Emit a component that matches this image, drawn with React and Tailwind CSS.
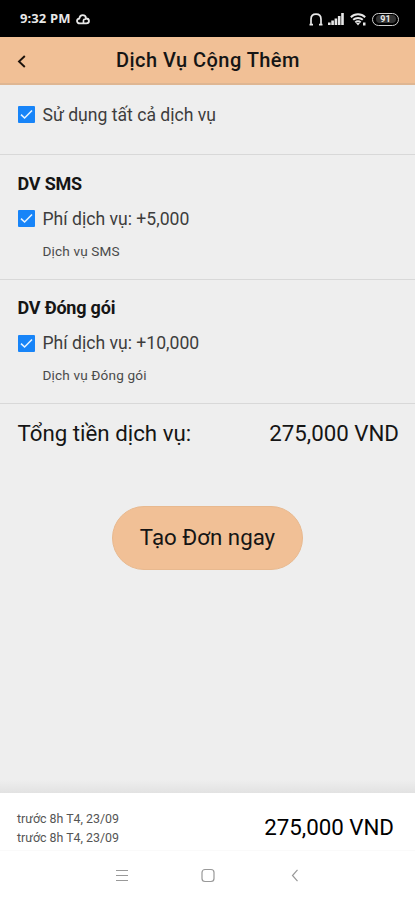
import { useState } from 'react';

const services = [
  { id: 'sms', title: 'DV SMS', fee: '+5,000', note: 'Dịch vụ SMS' },
  { id: 'pack', title: 'DV Đóng gói', fee: '+10,000', note: 'Dịch vụ Đóng gói' },
];

function StatusBar() {
  return (
    <div className="flex h-[37px] shrink-0 items-center justify-between bg-black pl-[20px] pr-[16px] pt-px text-[#e8e8e8]">
      <div className="flex items-center gap-[5px]">
        <span className="w-[51px] whitespace-nowrap font-['Open_Sans',sans-serif] text-[13px] font-bold tracking-[0.1px]">9:32 PM</span>
        <svg width="14" height="11" viewBox="0 0 15 12" fill="none" stroke="currentColor" strokeWidth="2">
          <path d="M4 10.2C2.2 10.2 1 9.2 1 7.6C1 6.2 2 5.2 3.4 5.1C3.8 2.7 5.2 1.3 7.1 1.3C9.3 1.3 10.6 2.8 10.8 4.9C12.8 4.9 14 6.1 14 7.6C14 9.2 12.8 10.2 11.1 10.2Z" />
          <path d="M8 10V7.2C8 6 9.500 5.400 10.800 5.400" strokeWidth="1.8" />
        </svg>
      </div>
      <div className="flex items-center">
        <svg className="mr-[5px]" width="14" height="13" viewBox="0 0 14 13" fill="none" stroke="currentColor">
          <path d="M2 11V6.3C2 3 4 1.2 7 1.2C10 1.2 12 3 12 6.3V11" strokeWidth="1.7" />
          <path d="M0.5 11.6H4M13.5 11.6H10" strokeWidth="1.8" />
        </svg>
        <svg className="mr-[6px]" width="16" height="12" viewBox="0 0 16 12" fill="currentColor">
          <path d="M0 9.5h2.6V12H0zM3.3 7.5h2.6V12H3.3zM6.6 5.4h2.6V12H6.6zM9.9 3h2.6v9H9.9zM13.2 0h2.6v12h-2.6z" />
        </svg>
        <svg className="mr-[5px]" width="17" height="13" viewBox="0 0 17 13" fill="none" stroke="currentColor" strokeWidth="1.9">
          <path d="M0.8 4.2C4.8 0.3 11.2 0.3 15.2 4.2" />
          <path d="M3.2 6.8C5.8 4.3 10.2 4.3 12.8 6.8" />
          <path d="M5.3 9.3C6.8 7.8 9.2 7.8 10.7 9.3" />
          <path d="M6 10L8 12.4L10 10ZM13 9.5h2.5v3H13z" fill="currentColor" stroke="none" />
        </svg>
        <div className="flex h-[13px] w-[27px] items-center justify-center rounded-full border-[1.5px] border-[#cfcfcf]">
          <span className="flex h-[8px] w-[20px] items-center justify-center rounded-sm bg-[#333] font-[Roboto,sans-serif] text-[9px] font-bold leading-none">91</span>
        </div>
      </div>
    </div>
  );
}

function Checkbox({ checked, onChange, label }) {
  return (
    <label className="flex h-[22px] items-center">
      <input type="checkbox" className="sr-only" checked={checked} onChange={onChange} />
      <span className="mr-[8px] flex size-[17px] shrink-0 items-center justify-center rounded-[1px] bg-[#1784f8]">
        {checked && (
          <svg width="13" height="11" viewBox="0 0 13 11" fill="none" stroke="#e6f3ff" strokeWidth="1.6">
            <path d="M1 5.6L4.6 9L12 1.5" />
          </svg>
        )}
      </span>
      <span className="whitespace-nowrap text-[17.6px] leading-[22px] text-[#3d3d3d]">{label}</span>
    </label>
  );
}

export default function App() {
  const [selected, setSelected] = useState(['sms', 'pack']);
  const allSelected = selected.length === services.length;

  const toggleAll = () => {
    setSelected(allSelected ? [] : services.map((s) => s.id));
  };

  const toggle = (id) => {
    setSelected(selected.includes(id) ? selected.filter((s) => s !== id) : [...selected, id]);
  };

  return (
    <div className="flex h-[900px] w-[415px] flex-col overflow-hidden bg-[#eeeeee] font-[Roboto,sans-serif] text-[#151515]">
      <StatusBar />

      <header className="flex h-[48px] shrink-0 items-center border-b-2 border-[#dfb692] bg-[#f1c096] pl-[17px]">
        <button className="flex h-[14px] w-[10px]" aria-label="Back">
          <svg className="mt-[2px]" width="9" height="13" viewBox="0 0 9 13" fill="none" stroke="#1c130c" strokeWidth="1.9">
            <path d="M7.8 1L2 6.5L7.8 12" />
          </svg>
        </button>
        <h1 className="ml-[89px] whitespace-nowrap text-[20px] font-medium leading-6 tracking-[0.45px]">Dịch Vụ Cộng Thêm</h1>
      </header>

      <main className="flex-1">
        <section className="h-[70px] border-b border-[#d8d8d8] pl-[17.5px] pt-[18.5px]">
          <Checkbox checked={allSelected} onChange={toggleAll} label="Sử dụng tất cả dịch vụ" />
        </section>

        {services.map((s) => (
          <section key={s.id} className="h-[124.5px] border-b border-[#d8d8d8] pl-[17.5px] pt-[17.5px]">
            <h2 className="text-[18px] font-bold leading-[22px] tracking-[-0.2px]">{s.title}</h2>
            <div className="mt-[13px]">
              <Checkbox checked={selected.includes(s.id)} onChange={() => toggle(s.id)} label={'Phí dịch vụ: ' + s.fee} />
            </div>
            <p className="ml-[25px] mt-[12px] text-[13.6px] leading-[18px] tracking-[0.15px] text-[#4a4a4a]">{s.note}</p>
          </section>
        ))}

        <div className="flex items-center justify-between pl-[17.5px] pr-[16px] pt-[15px] text-[22.3px] leading-7">
          <span>Tổng tiền dịch vụ:</span>
          <span>275,000 VND</span>
        </div>

        <div className="mt-[59px] flex justify-center">
          <button className="h-[64px] w-[191px] rounded-full border border-[#e8b98f] bg-[#f1c096] text-[22.3px]">Tạo Đơn ngay</button>
        </div>
      </main>

      <div className="h-[13px] shrink-0 bg-linear-to-b from-[#eeeeee] to-[#e2e2e2]" />
      <footer className="flex h-[58px] shrink-0 items-center justify-between border-b border-[#fafafa] bg-white pl-[17px] pr-[21px]">
        <div className="mt-[12px] text-[12.4px] leading-[19px] text-[#555]">
          <p>trước 8h T4, 23/09</p>
          <p>trước 8h T4, 23/09</p>
        </div>
        <span className="mt-[12px] text-[22.3px] text-black">275,000 VND</span>
      </footer>

      <nav className="h-[49px] shrink-0 bg-white pt-[17px]">
        <svg className="ml-[115px]" width="186" height="15" viewBox="0 0 186 15" fill="none" stroke="#999" strokeWidth="1.2">
          <path d="M1 2.5H13M1 7.5H13M1 12.5H13" />
          <rect x="87" y="1.5" width="12" height="12" rx="3" />
          <path d="M182.5 1.8L177.5 7.5L182.5 13.2" />
        </svg>
      </nav>
    </div>
  );
}
